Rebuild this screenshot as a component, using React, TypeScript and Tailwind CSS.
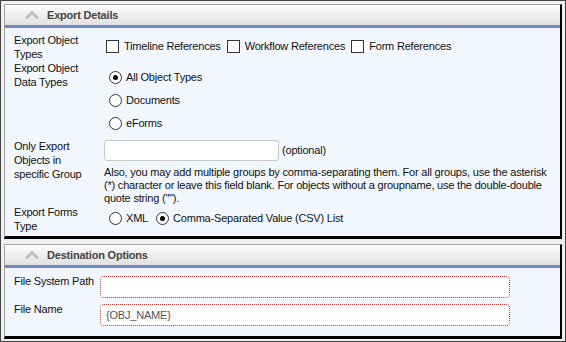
import React from "react"

function Chevron() {
  return (
    <svg width="16" height="10" viewBox="0 0 16 10" className="shrink-0">
      <polyline points="2,8.5 8,2.5 14,8.5" fill="none" stroke="#bdbdbd" strokeWidth="3" strokeLinejoin="miter" />
    </svg>
  )
}

function Box() {
  return <span className="inline-block w-[13px] h-[13px] border border-[#333] bg-white shrink-0" />
}

function Radio({ checked }: { checked?: boolean }) {
  return (
    <span className="w-[13px] h-[13px] rounded-full border border-[#333] bg-white flex items-center justify-center shrink-0">
      {checked && <span className="w-[5px] h-[5px] rounded-full bg-black" />}
    </span>
  )
}

function Panel({ title, children }: { title: string; children: React.ReactNode }) {
  return (
    <div className="border-t border-l border-[#a4a4a4] border-r-[2px] border-r-black border-b-[3px] border-b-black">
      <div className="h-[20px] flex items-center gap-[7px] pl-[19px] bg-linear-to-b from-[#fcfcfc] to-[#e1e1e1]">
        <Chevron />
        <span className="text-[11px] font-bold text-[#444] tracking-[-0.2px]">{title}</span>
      </div>
      <div className="h-[3px] bg-[#6a8ac9]" />
      <div className="bg-[#f2f7fe]">{children}</div>
    </div>
  )
}

export default function App() {
  return (
    <div className="w-[566px] h-[342px] overflow-hidden border border-[#444] bg-[#f0f0f0] p-[3px] flex flex-col gap-[5px] font-['Liberation_Sans',Arial,sans-serif] text-[11px] tracking-[-0.2px] text-[#111]">
      <Panel title="Export Details">
        <div className="pl-[9px] pt-[5px] pb-[3px]">
          {/* object types */}
          <div className="flex">
            <div className="w-[90px] shrink-0 leading-[14px]">Export Object<br />Types</div>
            <div className="flex items-center gap-[6px] ml-[2px] mt-[6px] h-[14px]">
              <label className="flex items-center gap-[5px]"><Box />Timeline References</label>
              <label className="flex items-center gap-[5px]"><Box />Workflow References</label>
              <label className="flex items-center gap-[5px]"><Box />Form References</label>
            </div>
          </div>

          {/* data types */}
          <div className="flex">
            <div className="w-[90px] shrink-0 leading-[14px]">Export Object<br />Data Types</div>
            <div className="flex flex-col mt-[5px] ml-[5px]">
              <label className="h-[23px] flex items-center gap-[4px]"><Radio checked />All Object Types</label>
              <label className="h-[23px] flex items-center gap-[4px]"><Radio />Documents</label>
              <label className="h-[23px] flex items-center gap-[4px]"><Radio />eForms</label>
            </div>
          </div>

          {/* group */}
          <div className="flex mt-[4px]">
            <div className="w-[90px] shrink-0 leading-[14px]">Only Export<br />Objects in<br />specific Group</div>
            <div className="flex flex-col mt-[1px]">
              <div className="flex items-center gap-[3px]">
                <div className="w-[175px] h-[21px] bg-white border border-[#c8c8c8] rounded-[3px]" />
                <span>(optional)</span>
              </div>
              <p className="mt-[5px] leading-[13px] whitespace-nowrap">
                Also, you may add multiple groups by comma-separating them. For all groups, use the asterisk<br />
                (*) character or leave this field blank. For objects without a groupname, use the double-double<br />
                quote string ("").
              </p>
            </div>
          </div>

          {/* forms type */}
          <div className="flex">
            <div className="w-[90px] shrink-0 leading-[14px]">Export Forms<br />Type</div>
            <div className="flex items-center gap-[8px] ml-[5px] mt-[6px] h-[14px]">
              <label className="flex items-center gap-[4px]"><Radio />XML</label>
              <label className="flex items-center gap-[4px]"><Radio checked />Comma-Separated Value (CSV) List</label>
            </div>
          </div>
        </div>
      </Panel>

      <Panel title="Destination Options">
        <div className="pl-[9px] pt-[6px] pb-[10px] flex flex-col gap-[4px]">
          <div className="flex items-start">
            <div className="w-[86px] shrink-0 leading-[14px]">File System Path</div>
            <div className="w-[410px] h-[22px] mt-[2px] bg-white border border-dotted border-[#c4302b] rounded-[4px]" />
          </div>
          <div className="flex items-start">
            <div className="w-[86px] shrink-0 leading-[14px]">File Name</div>
            <div className="w-[410px] h-[22px] mt-[2px] bg-white border border-dotted border-[#c4302b] rounded-[4px] flex items-center px-[5px] text-[#555]">
              {"{OBJ_NAME}"}
            </div>
          </div>
        </div>
      </Panel>
    </div>
  )
}
